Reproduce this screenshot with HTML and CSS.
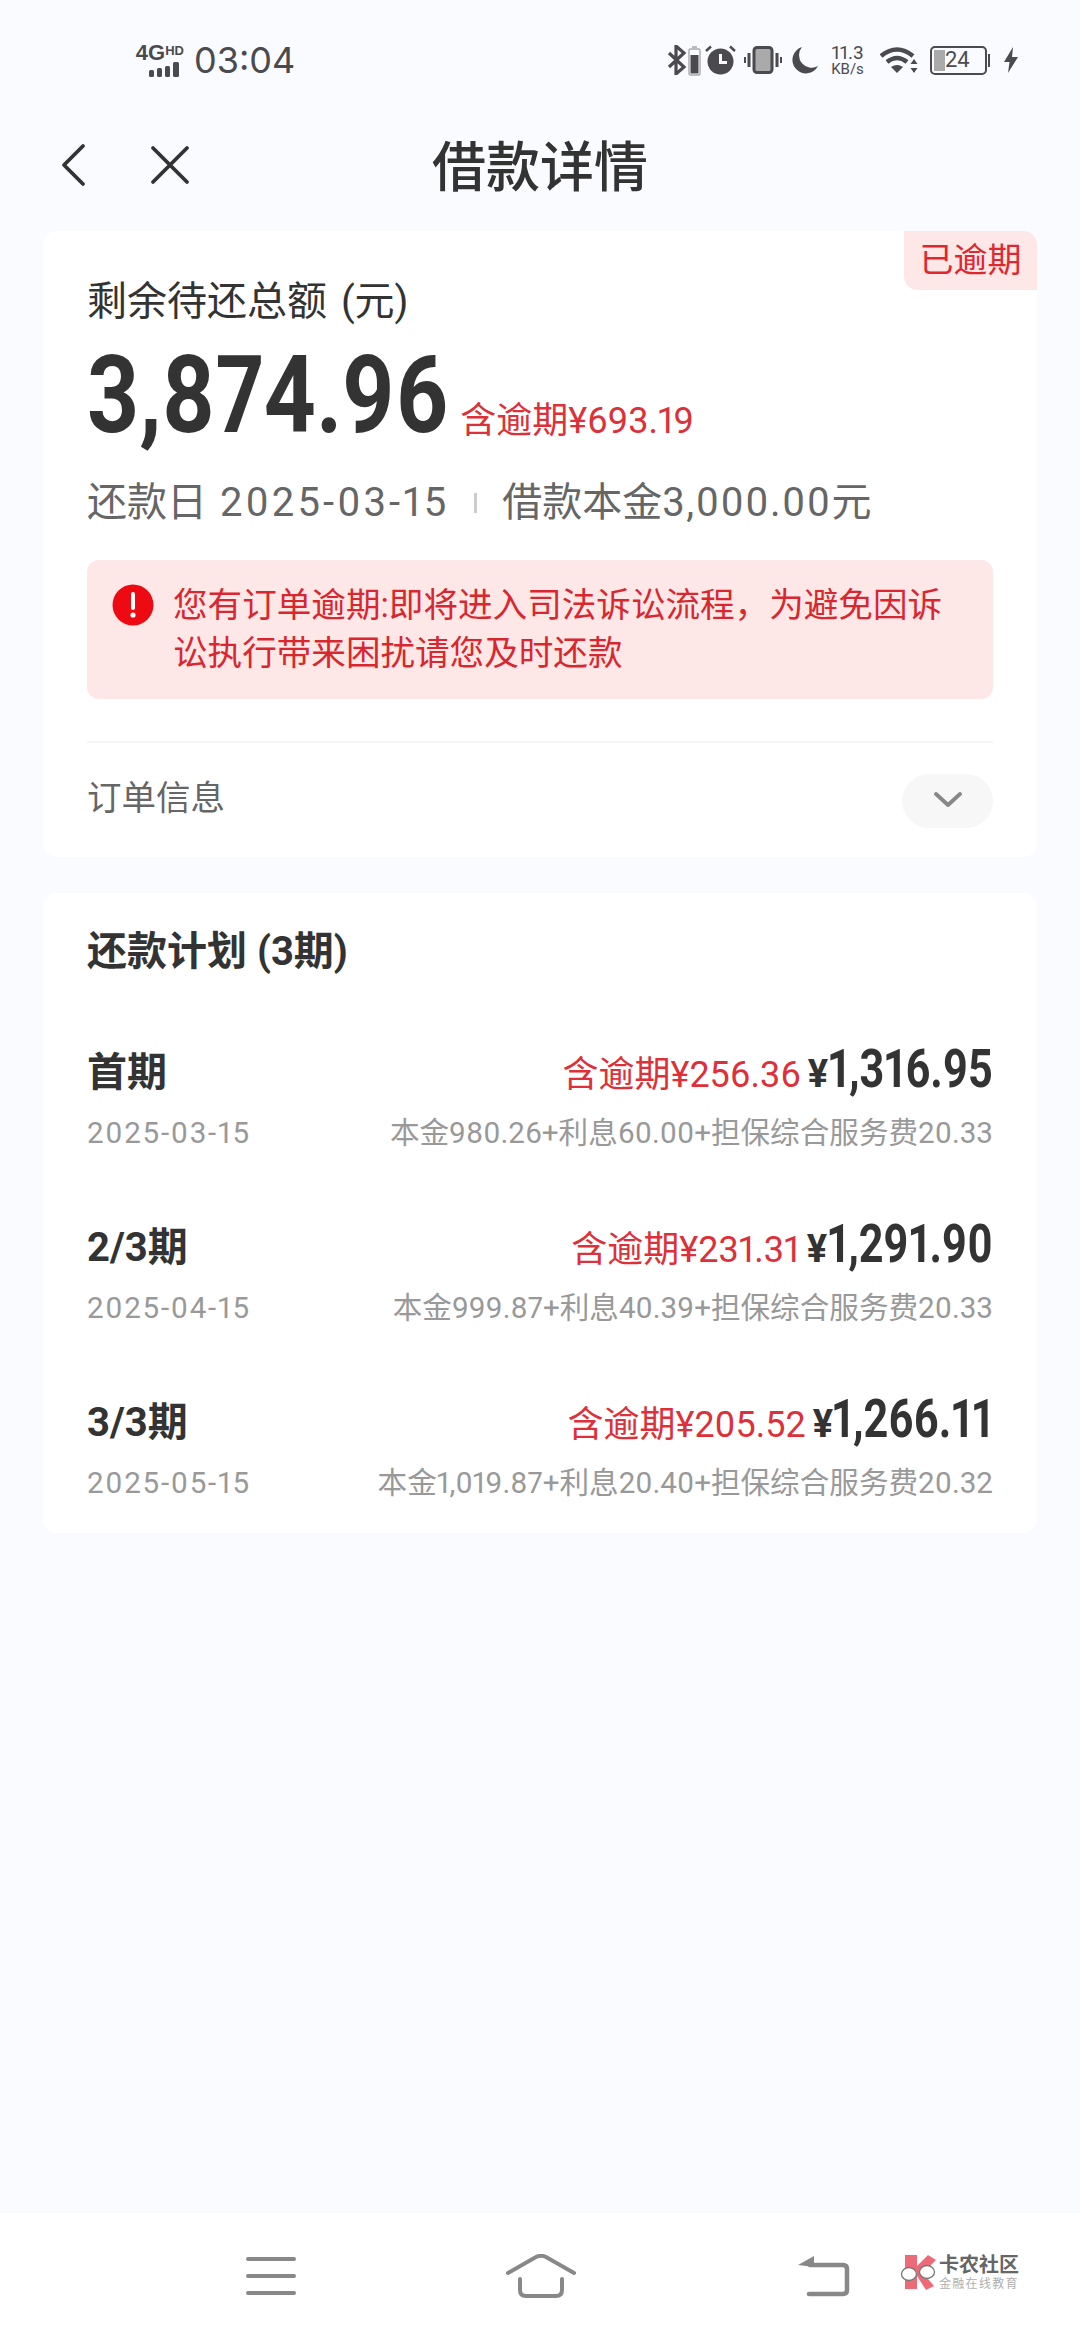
FILE: index.html
```html
<!DOCTYPE html>
<html>
<head>
    <title>借款详情</title>
    <link rel="stylesheet" href="styles.css">
</head>
<body>
    <div class="status-bar">
        <div class="status-left">
            <div class="signal">
                <span class="signal-type">4G<span class="signal-hd">HD</span></span>
                <svg width="36" height="16" viewBox="0 0 36 16"><g fill="#4a4a4f"><rect x="1" y="9" width="5" height="7" rx="1.5"/><rect x="9" y="7" width="5" height="9" rx="1.5"/><rect x="17" y="5" width="5" height="11" rx="1.5"/><rect x="25" y="1" width="6" height="15" rx="1.5"/></g></svg>
            </div>
            <span class="time">03:04</span>
        </div>
        <div class="status-right">
            <svg class="bt" width="20" height="30" viewBox="0 0 20 30"><path d="M2 8l15 14-8 7V1l8 7L2 22" fill="none" stroke="#4a4a4f" stroke-width="3.2"/></svg>
            <svg class="mini-batt" width="13" height="31" viewBox="0 0 13 31"><rect x="1" y="4" width="11" height="26" rx="1.5" fill="none" stroke="#aaa" stroke-width="1.4"/><rect x="4" y="1" width="5" height="3" fill="#bbb"/><rect x="2.5" y="10" width="8" height="18.5" fill="#4a4a4f"/></svg>
            <svg class="alarm" width="31" height="30" viewBox="0 0 31 30"><circle cx="15.5" cy="16.5" r="13" fill="#4a4a4f"/><path d="M15.5 9v8.5h6.5" fill="none" stroke="#fafbff" stroke-width="3"/><path d="M1 6l5-4.500M30 6l-5-4.500" stroke="#4a4a4f" stroke-width="2.4"/></svg>
            <svg class="vibrate" width="38" height="28" viewBox="0 0 38 28"><rect x="10" y="1.500" width="18" height="25" rx="3" fill="#aaa" stroke="#4a4a4f" stroke-width="3"/><path d="M5 7v14M33 7v14" stroke="#4a4a4f" stroke-width="3"/><path d="M1 11v6M37 11v6" stroke="#4a4a4f" stroke-width="2"/></svg>
            <svg class="moon" width="28" height="28" viewBox="0 0 28 28"><path d="M11 1A13.500 13.500 0 1 0 27 20 12.600 12.600 0 0 1 11 1z" fill="#4a4a4f"/></svg>
            <div class="speed"><span>11.3</span><span class="speed-unit">KB/s</span></div>
            <svg class="wifi" width="38" height="28" viewBox="0 0 38 28"><path d="M1 10Q17-3 33 10M7 16Q17 8 27 16" fill="none" stroke="#4a4a4f" stroke-width="4.500"/><path d="M11 21Q17 17 23 21l-6 6z" fill="#4a4a4f"/><path d="M34 13l3.500 5h-7zM34 27l3.500-5h-7z" fill="#4a4a4f"/></svg>
            <div class="battery">
                <div class="battery-body"><span class="battery-fill"></span><span class="battery-num">24</span></div>
                <span class="battery-cap"></span>
            </div>
            <svg class="bolt" width="14" height="26" viewBox="0 0 14 26"><path d="M9 0L0 15h5.500L4 26l10-16H8z" fill="#4a4a4f"/></svg>
        </div>
    </div>

    <div class="nav-bar">
        <div class="nav-icons">
            <svg width="26" height="44" viewBox="0 0 26 44"><path d="M23 3L4 22l19 19" fill="none" stroke="#333" stroke-width="3.800" stroke-linecap="round" stroke-linejoin="round"/></svg>
            <svg width="40" height="40" viewBox="0 0 40 40"><path d="M3 3l34 34M37 3L3 37" fill="none" stroke="#333" stroke-width="3.800" stroke-linecap="round"/></svg>
        </div>
        <h1 class="nav-title">借款详情</h1>
    </div>

    <div class="content">
        <section class="card summary">
            <span class="tag">已逾期</span>
            <div class="summary-label">剩余待还总额 (元)</div>
            <div class="summary-amount">
                <span class="big-num">3,874.96</span>
                <span class="overdue">含逾期¥693.19</span>
            </div>
            <div class="summary-meta">
                <span>还款日 <span class="num repay-date">2025-03-15</span></span>
                <i class="meta-sep"></i>
                <span>借款本金<span class="num">3,000.00</span>元</span>
            </div>
            <div class="alert">
                <svg class="alert-icon" width="42" height="42" viewBox="0 0 42 42"><circle cx="21" cy="21" r="20.500" fill="#ee0a12"/><path d="M21 10v14" stroke="#fff" stroke-width="4" stroke-linecap="round"/><circle cx="21" cy="31" r="2.600" fill="#fff"/></svg>
                <p>您有订单逾期:即将进入司法诉讼流程，为避免因诉讼执行带来困扰请您及时还款</p>
            </div>
            <div class="order-row">
                <span class="order-label">订单信息</span>
                <button class="expand" type="button">
                    <svg width="28" height="16" viewBox="0 0 28 16"><path d="M2 2l12 11L26 2" fill="none" stroke="#888" stroke-width="3.800" stroke-linecap="round" stroke-linejoin="round"/></svg>
                </button>
            </div>
        </section>

        <section class="card plan">
            <h2 class="plan-title">还款计划 (3期)</h2>
            <div class="plan-row">
                <div class="plan-line">
                    <span class="period">首期</span>
                    <div class="plan-right"><span class="overdue">含逾期¥256.36</span><span class="yen">¥</span><span class="amount">1,316.95</span></div>
                </div>
                <div class="plan-line sub">
                    <span class="date">2025-03-15</span>
                    <span>本金980.26+利息60.00+担保综合服务费20.33</span>
                </div>
            </div>
            <div class="plan-row">
                <div class="plan-line">
                    <span class="period">2/3期</span>
                    <div class="plan-right"><span class="overdue">含逾期¥231.31</span><span class="yen">¥</span><span class="amount">1,291.90</span></div>
                </div>
                <div class="plan-line sub">
                    <span class="date">2025-04-15</span>
                    <span>本金999.87+利息40.39+担保综合服务费20.33</span>
                </div>
            </div>
            <div class="plan-row">
                <div class="plan-line">
                    <span class="period">3/3期</span>
                    <div class="plan-right"><span class="overdue">含逾期¥205.52</span><span class="yen">¥</span><span class="amount">1,266.11</span></div>
                </div>
                <div class="plan-line sub">
                    <span class="date">2025-05-15</span>
                    <span>本金1,019.87+利息20.40+担保综合服务费20.32</span>
                </div>
            </div>
        </section>
    </div>

    <div class="bottom-bar">
        <svg width="50" height="40" viewBox="0 0 50 40"><path d="M2 3h46M2 20h46M2 37h46" stroke="#888" stroke-width="4" stroke-linecap="round"/></svg>
        <svg width="70" height="44" viewBox="0 0 70 44"><path d="M2 19L30 3q5-2.500 10 0L68 19" fill="none" stroke="#888" stroke-width="4" stroke-linecap="round"/><path d="M14 25v11q0 6 6 6h30q6 0 6-6V25" fill="none" stroke="#888" stroke-width="4" stroke-linecap="round"/></svg>
        <svg class="back-key" width="52" height="42" viewBox="0 0 52 42"><path d="M12 10h33q4 0 4 4v21q0 4-4 4H11" fill="none" stroke="#888" stroke-width="4.500" stroke-linecap="round"/><path d="M16 1L0 10l16 2z" fill="#888"/></svg>
        <div class="watermark">
            <svg width="37" height="36" viewBox="0 0 37 36"><path d="M5 0h12v11L28 0l8 5-13 13 11 13-8 4-9-14v13H5z" fill="#ee6a78"/><ellipse cx="9" cy="19" rx="7.500" ry="6.500" fill="#fff" stroke="#777" stroke-width="1.300"/><ellipse cx="27" cy="17" rx="7.500" ry="6.500" fill="#fff" stroke="#777" stroke-width="1.300"/></svg>
            <div class="watermark-text">
                <span class="watermark-name">卡农社区</span>
                <span class="watermark-sub">金融在线教育</span>
            </div>
        </div>
    </div>
</body>
</html>
```

FILE: styles.css
```css
* {
    box-sizing: border-box;
}

html, body {
    margin: 0;
    padding: 0;
}

body {
    width: 1080px;
    height: 2340px;
    display: flex;
    flex-direction: column;
    background-color: #fafbff;
    color: #333;
    font-family: Roboto, "Noto Sans CJK SC", sans-serif;
    font-variant-numeric: proportional-nums;
}

/* status bar */
.status-bar {
    height: 118px;
    flex: none;
    display: flex;
    justify-content: space-between;
    align-items: center;
    padding: 2px 62px 0 136px;
    color: #4a4a4f;
}

.status-left {
    display: flex;
    align-items: center;
    gap: 10px;
}

.signal {
    display: flex;
    flex-direction: column;
    align-items: flex-end;
    width: 48px;
}

.signal-type {
    font-family: "Liberation Sans", sans-serif;
    font-size: 22px;
    font-weight: 700;
    line-height: 16px;
    white-space: nowrap;
}

.signal-hd {
    font-size: 13px;
    vertical-align: 5px;
}

.time {
    font-family: Inter, sans-serif;
    font-size: 36px;
}

.status-right {
    display: flex;
    align-items: center;
}

.mini-batt {
    margin-left: 1px;
}

.alarm {
    margin-left: 4px;
}

.vibrate {
    margin-left: 8px;
}

.moon {
    margin-left: 9px;
}

.speed {
    display: flex;
    flex-direction: column;
    align-items: center;
    margin-left: 11px;
    width: 35px;
    font-size: 19px;
    line-height: 18px;
}

.speed-unit {
    font-size: 15px;
    line-height: 14px;
}

.wifi {
    margin-left: 15px;
}

.battery {
    display: flex;
    align-items: center;
    margin-left: 12px;
}

.battery-body {
    position: relative;
    width: 57px;
    height: 29px;
    border: 2.500px solid #4a4a4f;
    border-radius: 5px;
    font-size: 22px;
    line-height: 24px;
    padding-left: 13px;
}

.battery-fill {
    position: absolute;
    left: 2px;
    top: 2px;
    bottom: 2px;
    width: 11px;
    background-color: #aaa;
}

.battery-num {
    position: relative;
}

.battery-cap {
    width: 2px;
    height: 13px;
    margin-left: 1px;
    background-color: #4a4a4f;
}

.bolt {
    margin-left: 14px;
}

/* nav bar */
.nav-bar {
    height: 113px;
    flex: none;
    position: relative;
    display: flex;
    align-items: center;
    justify-content: center;
    padding-bottom: 22px;
}

.nav-icons {
    position: absolute;
    left: 60px;
    top: 25px;
    display: flex;
    align-items: center;
    gap: 64px;
}

.nav-title {
    margin: 0;
    font-size: 54px;
    font-weight: 500;
    color: #333;
}

/* cards */
.content {
    flex: 1;
    padding: 0 43px;
}

.card {
    background-color: #fff;
    border-radius: 14px;
    padding: 0 44px;
}

.summary {
    position: relative;
    height: 626px;
    padding-top: 47px;
}

.tag {
    position: absolute;
    right: 0;
    top: 0;
    width: 133px;
    height: 59px;
    background-color: #fee7e7;
    border-radius: 0 14px 0 14px;
    color: #e0262e;
    font-size: 34px;
    line-height: 59px;
    text-align: center;
}

.summary-label {
    font-size: 40px;
    line-height: 48px;
    word-spacing: 4px;
    color: #333;
}

.summary-amount {
    display: flex;
    align-items: flex-end;
    margin-top: 26px;
    height: 88px;
}

.big-num {
    display: inline-block;
    font-size: 107px;
    font-weight: 700;
    line-height: 88px;
    color: #333;
    transform: scaleX(0.85);
    transform-origin: left center;
    margin-right: -52px;
}

.overdue {
    color: #dd3038;
    font-size: 35px;
    line-height: 44px;
}

.summary-amount .overdue {
    font-size: 36px;
    margin-bottom: -3px;
}

.summary-meta {
    display: flex;
    align-items: center;
    margin-top: 38px;
    font-size: 40px;
    line-height: 50px;
    color: #666;
}

.num {
    letter-spacing: 1.500px;
}

.repay-date {
    margin-left: 3px;
    letter-spacing: 3.100px;
}

.meta-sep {
    width: 3px;
    height: 20px;
    margin: 0 25px 0 25px;
    background-color: #ccc;
}

.alert {
    display: flex;
    align-items: flex-start;
    gap: 19px;
    margin-top: 32px;
    height: 139px;
    padding: 21px 24px 0 25px;
    background-color: #fee7e7;
    border-radius: 12px;
}

.alert-icon {
    flex: none;
    margin-top: 3px;
}

.alert p {
    margin: 0;
    font-size: 34.600px;
    line-height: 48px;
    color: #d8272f;
}

.order-row {
    display: flex;
    justify-content: space-between;
    align-items: center;
    margin-top: 42px;
    padding-top: 31px;
    border-top: 2px solid #f4f4f6;
    font-size: 34.500px;
    color: #666;
}

.order-label {
    line-height: 40px;
    margin-bottom: 6px;
}

.expand {
    width: 91px;
    height: 54px;
    padding: 0;
    border: none;
    border-radius: 27px;
    background-color: #f7f7f8;
}

/* repayment plan */
.plan {
    height: 640px;
    margin-top: 36px;
    padding-top: 33px;
}

.plan-title {
    margin: 0 0 34px 0;
    font-size: 40px;
    line-height: 52px;
    font-weight: 700;
    color: #333;
}

.plan-row {
    height: 175px;
    padding-top: 27px;
}

.plan-line {
    display: flex;
    justify-content: space-between;
    align-items: center;
}

.plan-line.sub {
    margin-top: 8px;
    font-size: 29.600px;
    line-height: 42px;
    color: #999;
}

.date {
    letter-spacing: 1.700px;
}

.period {
    font-size: 40px;
    font-weight: 700;
    color: #333;
    margin-bottom: 6px;
}

.plan-right {
    display: flex;
    align-items: baseline;
    line-height: 60px;
}

.plan-right .overdue {
    font-size: 36px;
    margin-right: 7px;
}

.yen {
    font-size: 38px;
    font-weight: 700;
}

.amount {
    display: inline-block;
    font-size: 54px;
    font-weight: 700;
    color: #333;
    transform: scaleX(0.8);
    transform-origin: right center;
    margin-left: -41px;
}

/* bottom navigation */
.bottom-bar {
    height: 127px;
    flex: none;
    position: relative;
    display: flex;
    align-items: center;
    gap: 210px;
    padding: 0 0 2px 246px;
    background-color: #fff;
}

.back-key {
    margin-left: 12px;
}

.watermark {
    position: absolute;
    left: 900px;
    top: 40px;
    display: flex;
    align-items: center;
    gap: 2px;
}

.watermark-text {
    display: flex;
    flex-direction: column;
    color: #666;
}

.watermark-name {
    font-size: 20px;
    font-weight: 700;
    line-height: 24px;
}

.watermark-sub {
    font-size: 12px;
    letter-spacing: 1.300px;
    line-height: 15px;
    color: #b0b0b0;
}
```
